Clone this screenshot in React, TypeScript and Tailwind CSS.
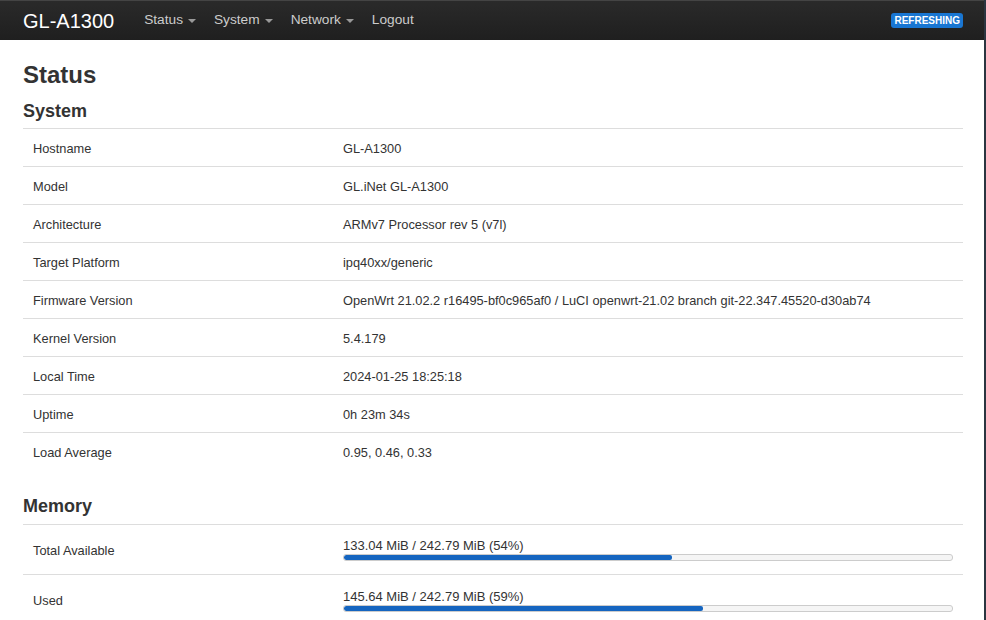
import React from 'react'

const systemRows: [string, string][] = [
  ['Hostname', 'GL-A1300'],
  ['Model', 'GL.iNet GL-A1300'],
  ['Architecture', 'ARMv7 Processor rev 5 (v7l)'],
  ['Target Platform', 'ipq40xx/generic'],
  ['Firmware Version', 'OpenWrt 21.02.2 r16495-bf0c965af0 / LuCI openwrt-21.02 branch git-22.347.45520-d30ab74'],
  ['Kernel Version', '5.4.179'],
  ['Local Time', '2024-01-25 18:25:18'],
  ['Uptime', '0h 23m 34s'],
  ['Load Average', '0.95, 0.46, 0.33'],
]

const memoryRows = [
  { label: 'Total Available', text: '133.04 MiB / 242.79 MiB (54%)', pct: 54 },
  { label: 'Used', text: '145.64 MiB / 242.79 MiB (59%)', pct: 59 },
]

function Caret() {
  return <span className="inline-block ml-[5px] align-middle border-x-[4px] border-x-transparent border-t-[4px] border-t-[#999]" />
}

export default function App() {
  return (
    <div className="min-h-[620px] bg-white border-r-2 border-[#2b3540] text-[#333]" style={{ fontFamily: '"Liberation Sans", Arial, sans-serif' }}>
      {/* Navbar */}
      <div className="h-10 flex items-center bg-gradient-to-b from-[#2a2a2a] to-[#1f1f1f] border-t border-[#444]">
        <div className="pl-[23px] pr-[30px] text-[20px] text-white leading-none">GL-A1300</div>
        <nav className="flex items-center gap-[18px] text-[13.7px] text-[#ccc]">
          <span>Status<Caret /></span>
          <span>System<Caret /></span>
          <span>Network<Caret /></span>
          <span>Logout</span>
        </nav>
        <div className="ml-auto mr-[21px]">
          <span className="block bg-[#1976d2] text-white text-[10px] font-bold leading-[15px] px-[3px] rounded-[3px]">REFRESHING</span>
        </div>
      </div>

      {/* Content */}
      <div className="pl-[23px] pr-[21px]">
        <h2 className="text-[24px] font-bold leading-[28px] pt-[21px] text-[#333]">Status</h2>
        <h3 className="text-[18px] font-bold leading-[22px] mt-[11px] mb-[6px] text-[#333]">System</h3>
        <div className="border-t border-[#ddd]">
          {systemRows.map(([k, v], i) => (
            <div key={k} className={`flex h-[38px] pt-[2px] items-center text-[12.8px] ${i < systemRows.length - 1 ? 'border-b border-[#ddd]' : ''}`}>
              <div className="w-[320px] pl-[10px] shrink-0">{k}</div>
              <div>{v}</div>
            </div>
          ))}
        </div>

        <h3 className="text-[18px] font-bold leading-[22px] mt-[24px] mb-[7px] text-[#333]">Memory</h3>
        <div className="border-t border-[#ddd]">
          {memoryRows.map((r, i) => (
            <div key={r.label} className={`flex h-[50px] pt-[2px] items-center text-[12.8px] ${i < memoryRows.length - 1 ? 'border-b border-[#ddd]' : ''}`}>
              <div className="w-[320px] pl-[10px] shrink-0">{r.label}</div>
              <div className="flex-1 pr-[10px]">
                <div className="text-[13px] leading-[14px] mt-[-1px]">{r.text}</div>
                <div className="h-[7px] mt-[1px] rounded-[3px] border border-[#ccc] bg-[#f5f5f5] overflow-hidden">
                  <div className="h-full bg-[#1565c0] rounded-[2px]" style={{ width: `${r.pct}%` }} />
                </div>
              </div>
            </div>
          ))}
        </div>
      </div>
    </div>
  )
}
